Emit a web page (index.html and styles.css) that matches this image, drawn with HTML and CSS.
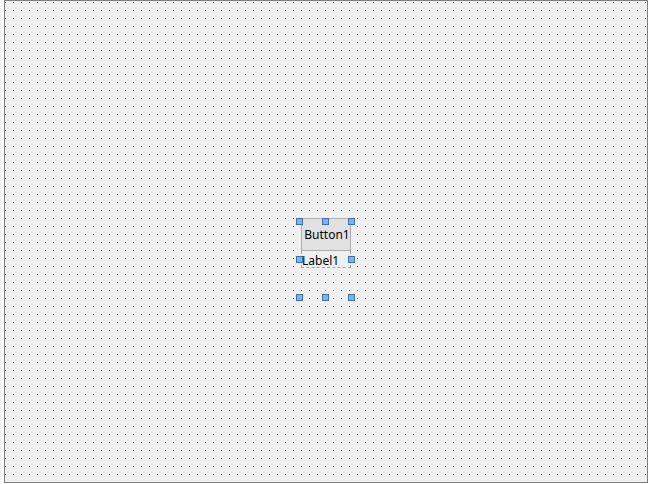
FILE: index.html
```
<!DOCTYPE html>
<html>
<head>
<meta charset="utf-8">
<link rel="stylesheet" href="styles.css">
</head>
<body>
<div class="form">
  <div class="btn">Button1</div>
  <div class="lbl">Label1</div>
  <span class="h h1"></span>
  <span class="h h2"></span>
  <span class="h h3"></span>
  <span class="h h4"></span>
  <span class="h h5"></span>
  <span class="h h6"></span>
  <span class="h h7"></span>
  <span class="h h8"></span>
</div>
</body>
</html>
```
FILE: styles.css
```
html, body {
  margin: 0;
  padding: 0;
  background: #ffffff;
}
.form {
  position: relative;
  margin-left: 4px;
  width: 644px;
  height: 483px;
  box-sizing: border-box;
  border: 1px solid #7f7f7f;
  background-color: #6f6f6f;
  background-image: conic-gradient(at 1px 1px, #f0f0f0 75%, transparent 0);
  background-size: 8px 8px;
  background-position: 0 1px;
  font-family: "Noto Sans", "Open Sans", sans-serif;
  font-size: 12px;
  color: #000;
}
.btn {
  position: absolute;
  left: 296px;
  top: 217px;
  width: 50px;
  height: 33px;
  box-sizing: border-box;
  border: 1px solid #adadad;
  background: #e1e1e1;
  display: flex;
  align-items: center;
  justify-content: center;
  line-height: 1;
  padding-left: 2px;
}
.lbl {
  position: absolute;
  left: 296px;
  top: 250px;
  width: 50px;
  height: 17px;
  box-sizing: border-box;
  border-right: 1px dashed #a0a0a0;
  border-bottom: 1px dashed #a0a0a0;
  border-left: 1px dashed #a0a0a0;
  padding-top: 2px;
  line-height: 16px;
  overflow: hidden;
  background: #f0f0f0;
}
.h {
  position: absolute;
  width: 7px;
  height: 7px;
  box-sizing: border-box;
  border: 1px solid #3a73b5;
  background: #7fb2ea;
}
.h1 { left: 291px; top: 217px; }
.h2 { left: 317px; top: 217px; }
.h3 { left: 343px; top: 217px; }
.h4 { left: 291px; top: 255px; }
.h5 { left: 343px; top: 255px; }
.h6 { left: 291px; top: 293px; }
.h7 { left: 317px; top: 293px; }
.h8 { left: 343px; top: 293px; }
```
